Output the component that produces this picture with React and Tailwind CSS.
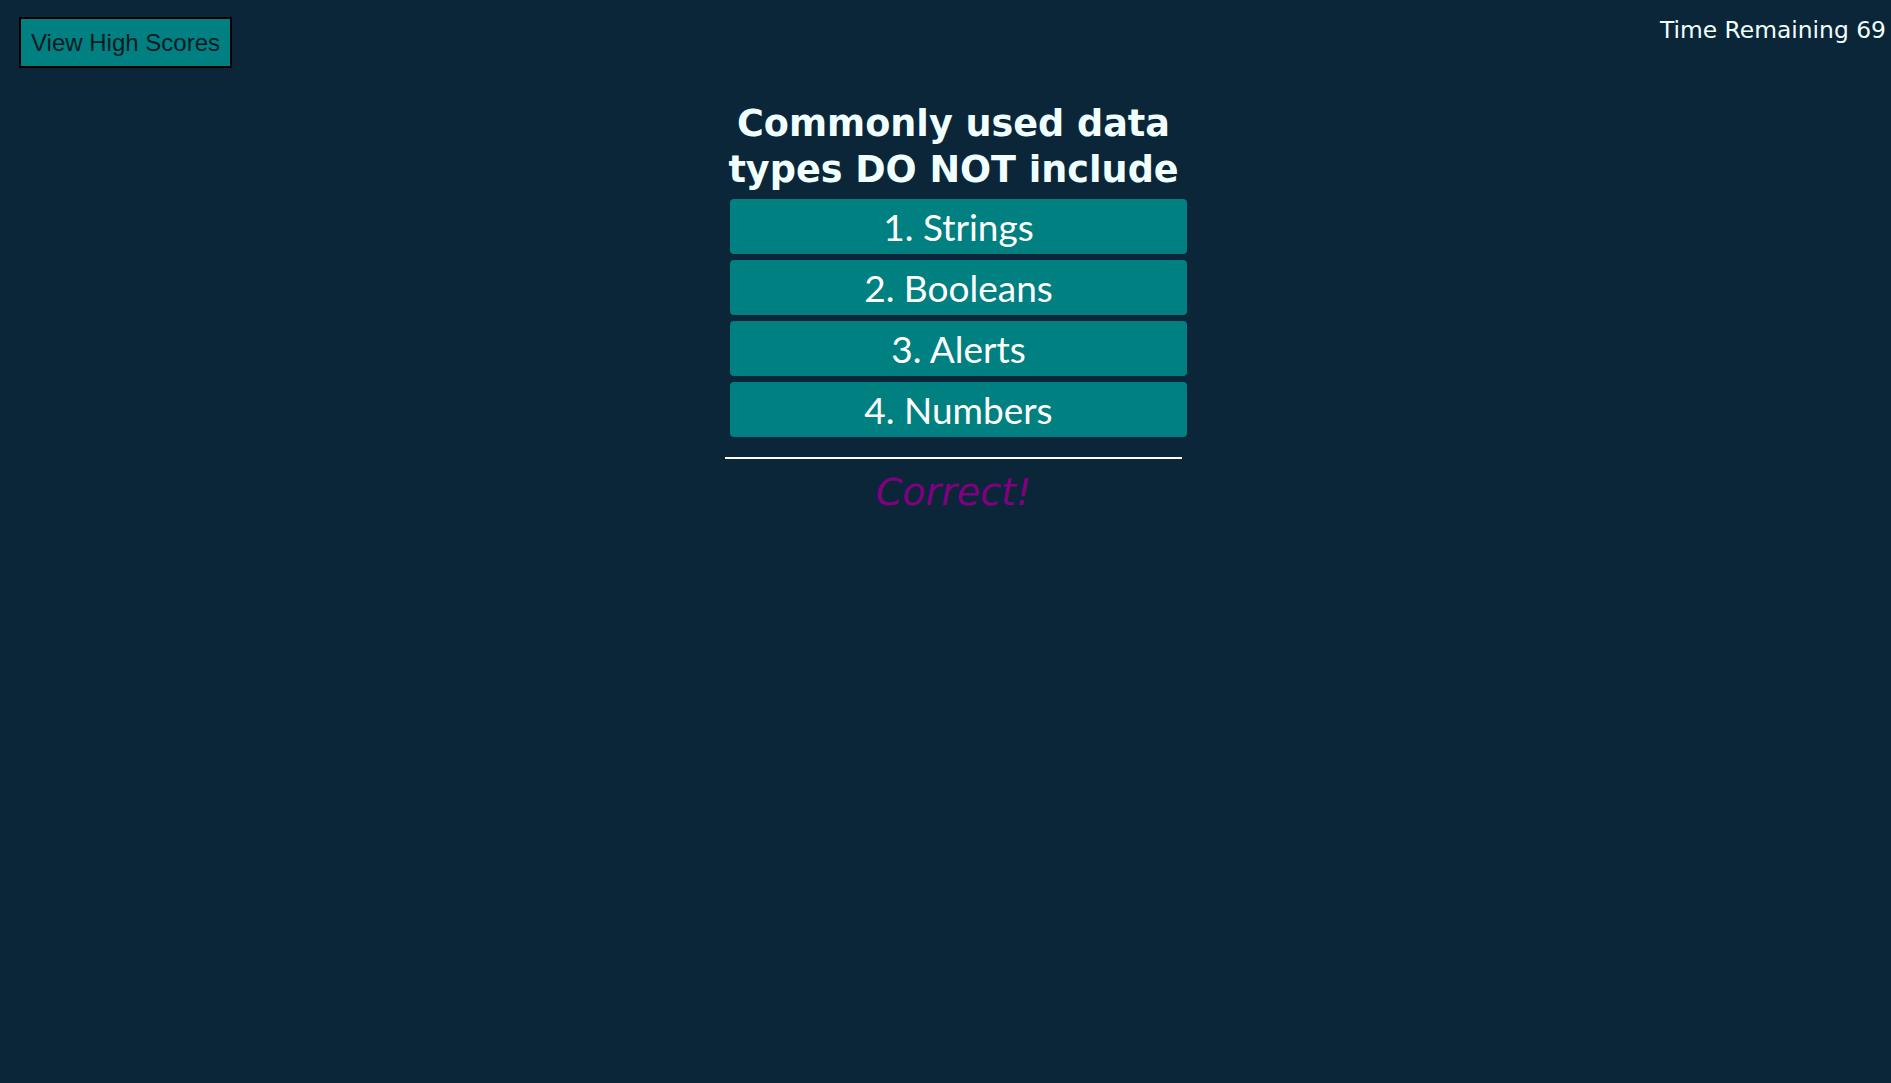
export default function App() {
  const choices = ['1. Strings', '2. Booleans', '3. Alerts', '4. Numbers'];

  return (
    <div className="min-h-screen bg-[#0a2638] font-['DejaVu_Sans',sans-serif]">
      <header className="flex items-start justify-between">
        <button className="mt-[17px] ml-[19px] border-2 border-black bg-[#008080] px-[10px] py-[10px] font-['Liberation_Sans',Arial,sans-serif] text-[24px] leading-[27px] text-[#0a1a24]">
          View High Scores
        </button>
        <div className="mt-[17px] mr-[5px] text-[23.4px] leading-[27px] text-[#f0ffff]">
          Time Remaining 69
        </div>
      </header>

      <main className="flex justify-center pl-[16px]">
        <div className="w-[457px] mt-[33px]">
          <h1 className="text-center text-[36.6px] font-bold leading-[46px] text-[#f0ffff]">
            Commonly used data types DO NOT include
          </h1>
          <div className="mt-[6px] flex flex-col gap-[6px]">
            {choices.map((c) => (
              <button
                key={c}
                className="ml-[5px] h-[55px] w-full rounded-[4px] bg-[#008080] font-['Lato',sans-serif] text-[37px] leading-[55px] text-white"
              >
                {c}
              </button>
            ))}
          </div>
          <hr className="mt-[20px] border-0 h-[2px] bg-white" />
          <p className="mt-[10px] text-center text-[38px] italic leading-[46px] text-[#800080]">
            Correct!
          </p>
        </div>
      </main>
    </div>
  );
}
